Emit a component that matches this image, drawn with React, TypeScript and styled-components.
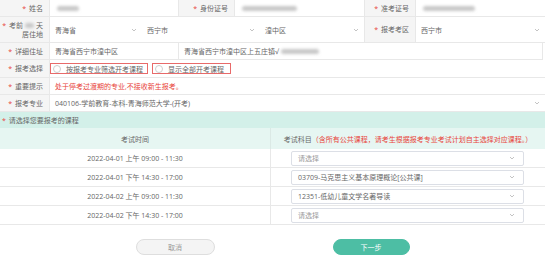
import { Fragment } from 'react'
import styled, { createGlobalStyle } from 'styled-components'

const GlobalStyle = createGlobalStyle`
  * { box-sizing: border-box; }
  body {
    margin: 0;
    background: #fff;
    font-family: "Open Sans", "Noto Sans CJK SC", sans-serif;
    color: #666;
  }
`

const Page = styled.div`
  width: 545px;
  height: 257px;
  overflow: hidden;
  background: #fff;
`

const FormGrid = styled.div`
  display: grid;
  grid-template-columns: 50px 128px 57px 129px 52px 129px;
  grid-template-rows: 17px 26px 17px 18px 17px 17px;
`

const Label = styled.div<{ $edge?: boolean }>`
  background: #f5f5f5;
  border-bottom: 1px solid #e8e8e8;
  border-right: 1px solid #e8e8e8;
  border-left: ${({ $edge }) => ($edge ? 'none' : '1px solid #e8e8e8')};
  display: flex;
  flex-direction: column;
  align-items: flex-end;
  justify-content: center;
  padding-right: 6px;
  font-size: 7px;
  line-height: 9px;
  color: #666;
  white-space: nowrap;
`

const Star = styled.span`
  color: #e8443a;
  margin-right: 3px;
`

const Cell = styled.div<{ $span?: string }>`
  grid-column: ${({ $span }) => $span ?? 'auto'};
  border-bottom: 1px solid #e8e8e8;
  display: flex;
  align-items: center;
  padding: 0 5px;
  font-size: 7px;
  color: #666;
  white-space: nowrap;
  min-width: 0;
`

const Warn = styled.span`
  color: #e8443a;
`

const Blur = styled.span<{ $w: number }>`
  display: inline-block;
  width: ${({ $w }) => $w}px;
  height: 5px;
  border-radius: 3px;
  background: #c8c8c8;
  filter: blur(1.4px);
  margin: 0 2px;
`

const Regions = styled.div`
  grid-column: 2 / 5;
  border-bottom: 1px solid #e8e8e8;
  display: flex;
`

const SelectBox = styled.div<{ $w?: number; $pad?: boolean }>`
  flex: ${({ $w }) => ($w ? `0 0 ${$w}px` : '1')};
  display: flex;
  align-items: center;
  justify-content: space-between;
  padding: ${({ $pad }) => ($pad ? '0 5px' : '0')};
  font-size: 7px;
  color: #666;
  white-space: nowrap;
`

const AddressInput = styled.div`
  grid-column: 3 / 7;
  border-bottom: 1px solid #e8e8e8;
  border-left: 1px solid #e8e8e8;
  border-right: 1px solid #e8e8e8;
  display: flex;
  align-items: center;
  padding: 0 5px;
  font-size: 7px;
  color: #666;
  white-space: nowrap;
  margin-right: 2px;
`

const Radios = styled.div`
  grid-column: 2 / 7;
  border-bottom: 1px solid #e8e8e8;
  display: flex;
  align-items: center;
  gap: 4px;
`

const RadioOption = styled.div<{ $w: number }>`
  width: ${({ $w }) => $w}px;
  height: 11px;
  border: 1px solid #e86a6a;
  display: flex;
  align-items: center;
  gap: 5px;
  padding-left: 2px;
  font-size: 7px;
  color: #666;
  white-space: nowrap;
`

const Circle = styled.span`
  width: 8px;
  height: 8px;
  border-radius: 50%;
  border: 1px solid #cfcfcf;
  background: #fff;
`

const SectionBar = styled.div`
  height: 16px;
  background: #d3f0e9;
  display: flex;
  align-items: center;
  padding-left: 2px;
  font-size: 7px;
  color: #666;
`

const Table = styled.div`
  display: grid;
  grid-template-columns: 270px 275px;
`

const HeadCell = styled.div<{ $split?: boolean }>`
  height: 21px;
  background: #e6f6f2;
  border-left: ${({ $split }) => ($split ? '1px solid #dbe9e5' : 'none')};
  display: flex;
  align-items: center;
  justify-content: center;
  font-size: 7px;
  color: #666;
  white-space: nowrap;
`

const BodyCell = styled.div<{ $split?: boolean }>`
  height: 19px;
  border-bottom: 1px solid #e8e8e8;
  border-left: ${({ $split }) => ($split ? '1px solid #e8e8e8' : 'none')};
  display: flex;
  align-items: center;
  justify-content: center;
  font-size: 7px;
  color: #666;
  white-space: nowrap;
`

const CourseSelect = styled.div<{ $empty?: boolean }>`
  width: 233px;
  height: 15px;
  margin-left: 20px;
  margin-right: auto;
  border: 1px solid #dcdfe6;
  border-radius: 2px;
  display: flex;
  align-items: center;
  justify-content: space-between;
  padding: 0 8px 0 6px;
  font-size: 7px;
  color: ${({ $empty }) => ($empty ? '#9a9a9a' : '#666')};
`

const Actions = styled.div`
  display: flex;
  justify-content: center;
  gap: 118px;
  padding-top: 14px;
`

const Button = styled.button<{ $primary?: boolean }>`
  width: ${({ $primary }) => ($primary ? 77 : 79)}px;
  height: 16px;
  border-radius: 8px;
  border: 1px solid ${({ $primary }) => ($primary ? '#4dbea4' : '#dedede')};
  background: ${({ $primary }) => ($primary ? '#4dbea4' : '#f4f4f4')};
  color: ${({ $primary }) => ($primary ? '#fff' : '#9a9a9a')};
  font-family: inherit;
  font-size: 7px;
  padding: 0;
  cursor: pointer;
`

const Chevron = () => (
  <svg width="6" height="4" viewBox="0 0 6 4">
    <path d="M1 1 L3 3 L5 1" fill="none" stroke="#b5b5b5" strokeWidth="0.8" />
  </svg>
)

const rows = [
  { time: '2022-04-01 上午 09:00 - 11:30', course: '请选择', empty: true },
  { time: '2022-04-01 下午 14:30 - 17:00', course: '03709-马克思主义基本原理概论[公共课]' },
  { time: '2022-04-02 上午 09:00 - 11:30', course: '12351-低幼儿童文学名著导读' },
  { time: '2022-04-02 下午 14:30 - 17:00', course: '请选择', empty: true },
]

export default function App() {
  return (
    <Page>
      <GlobalStyle />
      <FormGrid>
        <Label $edge>
          <span><Star>*</Star>姓名</span>
        </Label>
        <Cell><Blur $w={22} /></Cell>
        <Label>
          <span><Star>*</Star>身份证号</span>
        </Label>
        <Cell><Blur $w={55} /></Cell>
        <Label>
          <span><Star>*</Star>准考证号</span>
        </Label>
        <Cell><Blur $w={52} /></Cell>

        <Label $edge>
          <span><Star>*</Star>考前<Blur $w={9} />天</span>
          <span>居住地</span>
        </Label>
        <Regions>
          <SelectBox $w={92} $pad>青海省<Chevron /></SelectBox>
          <SelectBox $w={118} $pad>西宁市<Chevron /></SelectBox>
          <SelectBox $pad>湟中区<Chevron /></SelectBox>
        </Regions>
        <Label>
          <span><Star>*</Star>报考考区</span>
        </Label>
        <Cell>
          <SelectBox>西宁市<Chevron /></SelectBox>
        </Cell>

        <Label $edge>
          <span><Star>*</Star>详细住址</span>
        </Label>
        <Cell>青海省西宁市湟中区</Cell>
        <AddressInput>
          青海省西宁市湟中区上五庄镇√<Blur $w={38} />
        </AddressInput>

        <Label $edge>
          <span><Star>*</Star>报考选择</span>
        </Label>
        <Radios>
          <RadioOption $w={98}><Circle />按报考专业筛选开考课程</RadioOption>
          <RadioOption $w={79}><Circle />显示全部开考课程</RadioOption>
        </Radios>

        <Label $edge>
          <span><Star>*</Star>重要提示</span>
        </Label>
        <Cell $span="2 / 7">
          <Warn>处于停考过渡期的专业,不接收新生报考。</Warn>
        </Cell>

        <Label $edge>
          <span><Star>*</Star>报考专业</span>
        </Label>
        <Cell $span="2 / 7">
          <SelectBox>040106-学前教育-本科-青海师范大学-(开考)<Chevron /></SelectBox>
        </Cell>
      </FormGrid>

      <SectionBar>
        <Star>*</Star>请选择您要报考的课程
      </SectionBar>

      <Table>
        <HeadCell>考试时间</HeadCell>
        <HeadCell $split>
          考试科目<Warn>（含所有公共课程，请考生根据报考专业考试计划自主选择对应课程。）</Warn>
        </HeadCell>
        {rows.map((row) => (
          <Fragment key={row.time}>
            <BodyCell>{row.time}</BodyCell>
            <BodyCell $split>
              <CourseSelect $empty={row.empty}>
                {row.course}
                <Chevron />
              </CourseSelect>
            </BodyCell>
          </Fragment>
        ))}
      </Table>

      <Actions>
        <Button>取消</Button>
        <Button $primary>下一步</Button>
      </Actions>
    </Page>
  )
}
